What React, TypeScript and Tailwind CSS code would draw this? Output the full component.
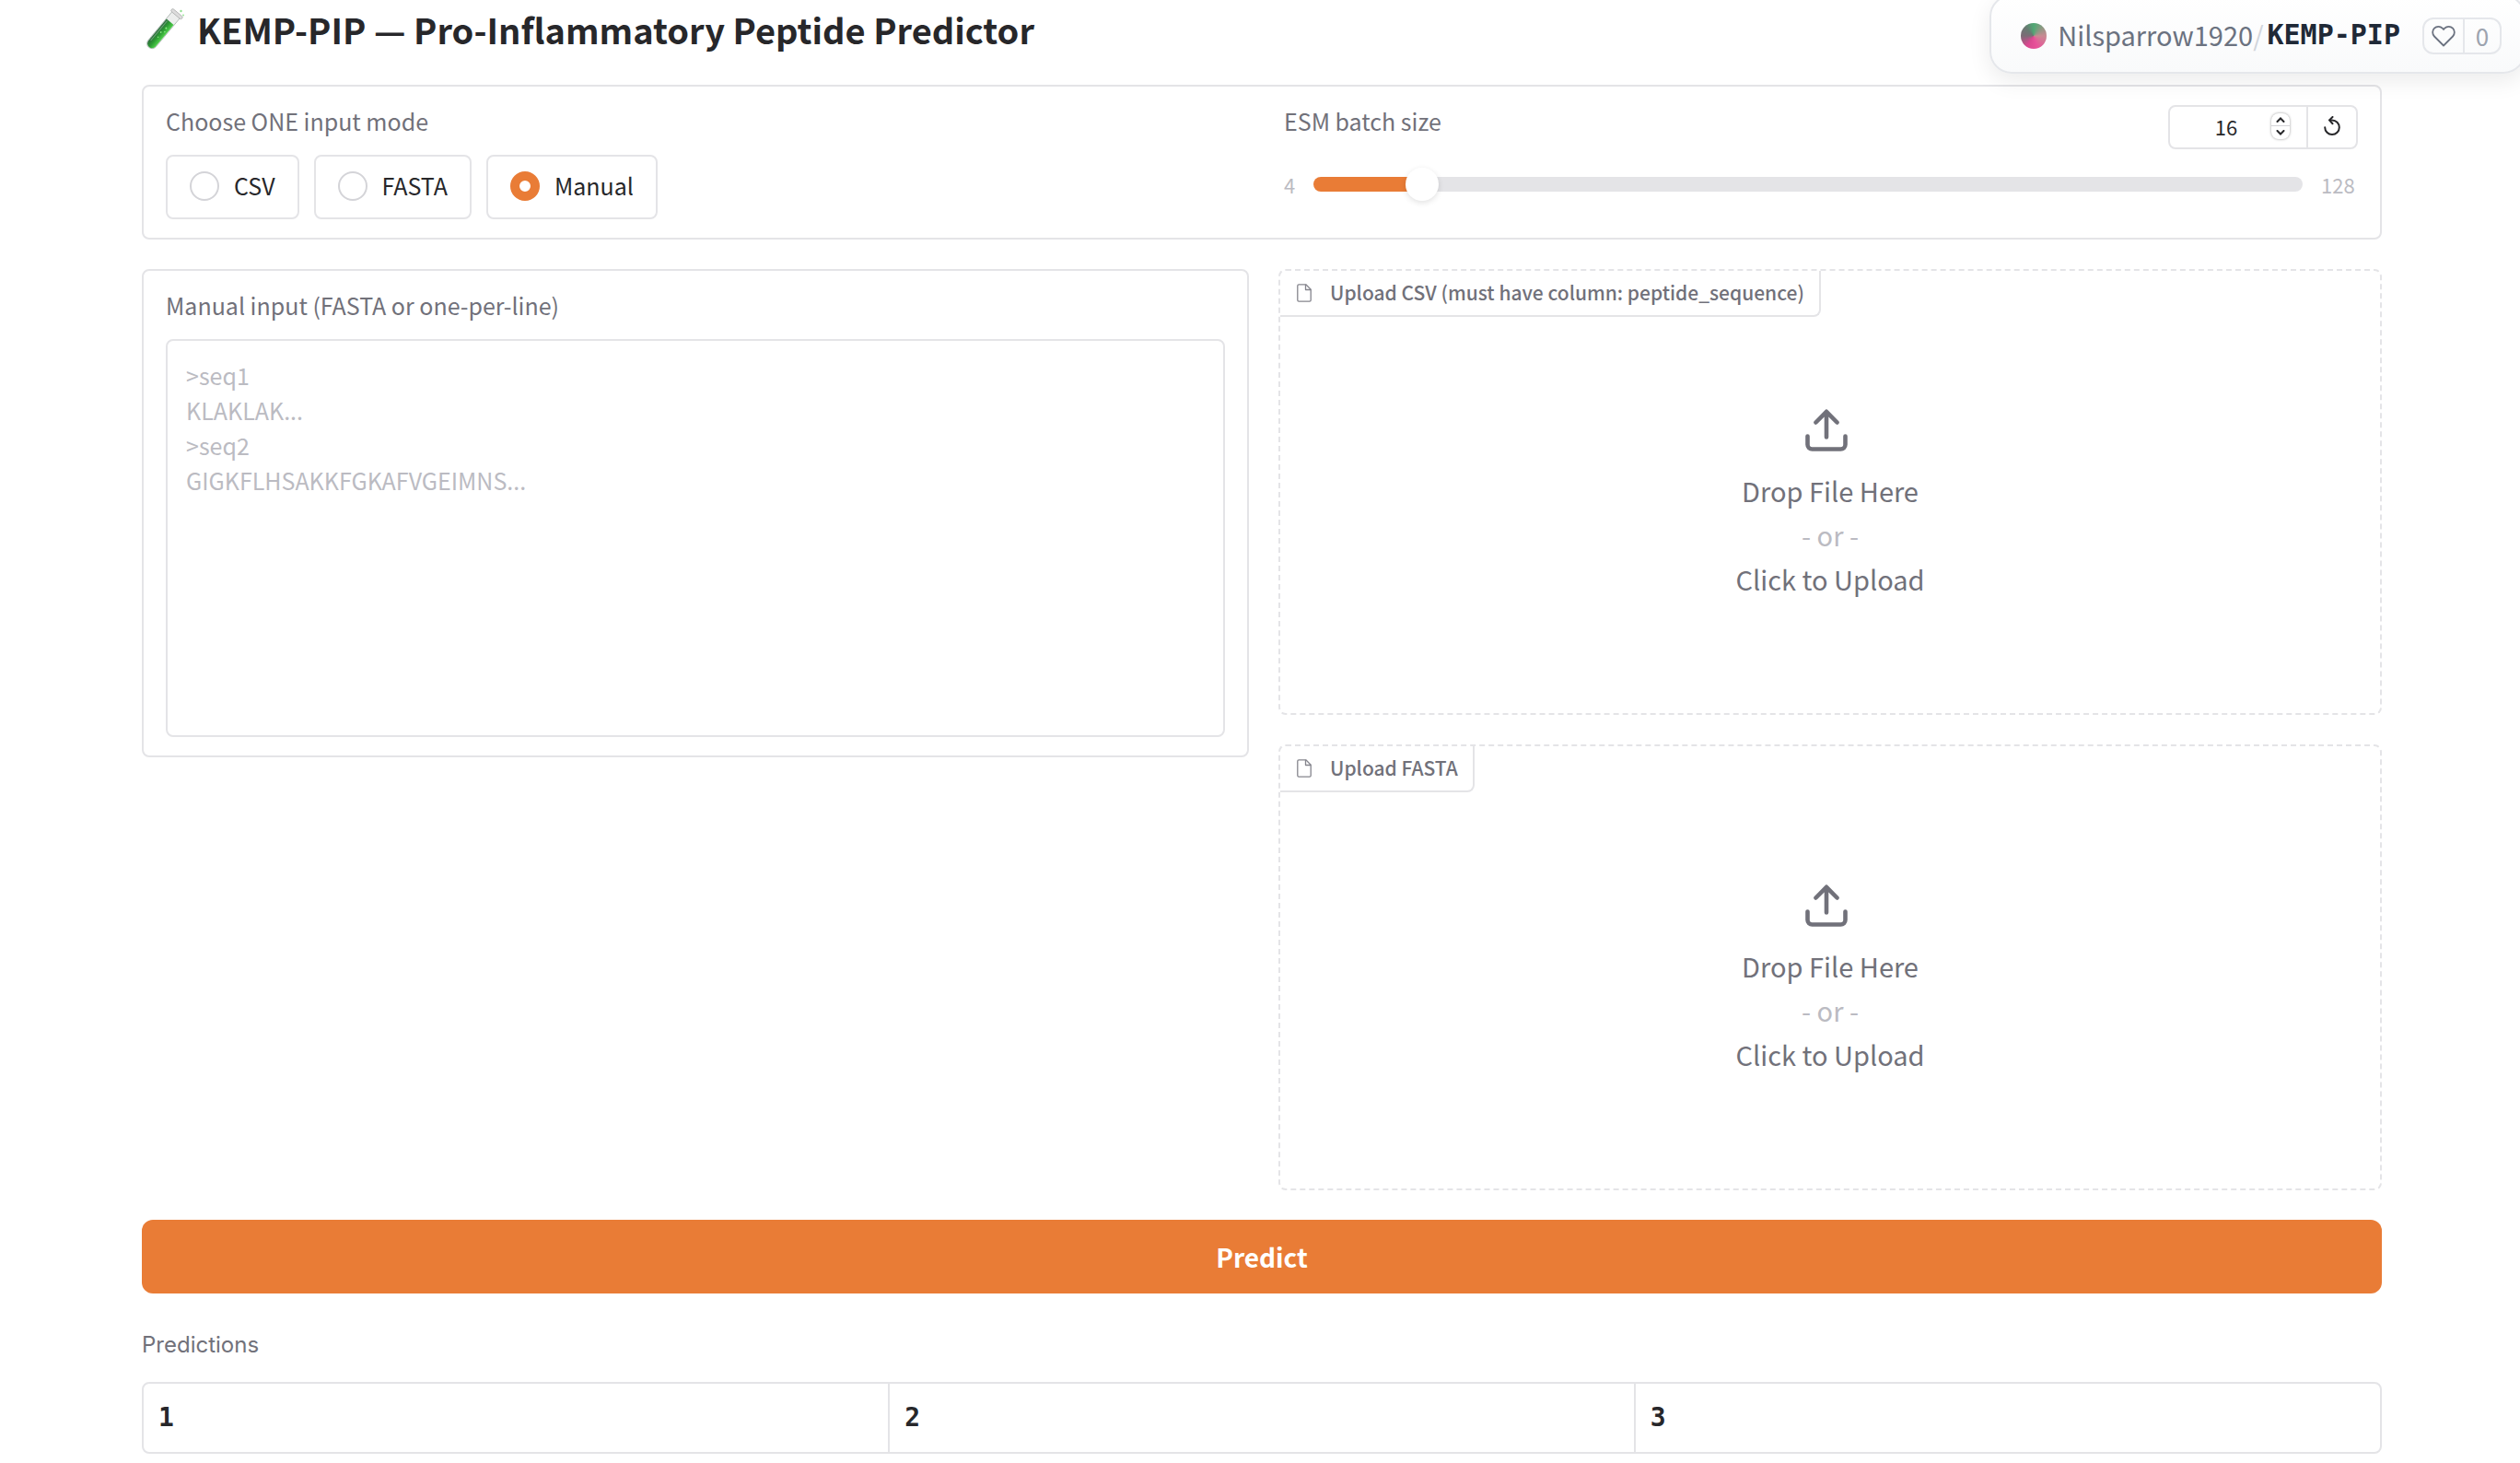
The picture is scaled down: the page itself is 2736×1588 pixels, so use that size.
import { useState } from 'react';

const border = 'border-2 border-[#e4e4e7]';

function TestTube() {
  return (
    <svg viewBox="0 0 48 48" className="size-12 shrink-0" aria-hidden="true">
      <defs>
        <linearGradient id="liquid" x1="0" y1="0" x2="1" y2="0">
          <stop offset="0" stopColor="#2c6b3c" />
          <stop offset="0.5" stopColor="#2c9a33" />
          <stop offset="1" stopColor="#4fcf4b" />
        </linearGradient>
      </defs>
      <g transform="rotate(40 23 25)">
        <path d="M17.500 2h11v41.500a5.500 5.500 0 0 1-11 0z" fill="#eceeed" stroke="#a9b3ae" strokeWidth="0.800" />
        <path d="M18 13h10v30.500a5 5 0 0 1-10 0z" fill="url(#liquid)" />
        <path d="M19.800 14v28" stroke="#8fb59a" strokeWidth="1" opacity="0.7" />
        <rect x="15.500" y="0" width="15" height="3.500" rx="1.700" fill="#dcdcdc" stroke="#a5a8a6" strokeWidth="0.700" />
        <circle cx="24" cy="21" r="1" fill="#8be884" />
        <circle cx="22.500" cy="28" r="0.900" fill="#8be884" />
        <circle cx="25.500" cy="25" r="0.800" fill="#8be884" />
        <circle cx="23.500" cy="34" r="0.700" fill="#8be884" />
      </g>
      <circle cx="42.500" cy="4" r="1.200" fill="#8fe08e" />
      <circle cx="45" cy="8.500" r="0.900" fill="#8fe08e" />
    </svg>
  );
}

function FileIcon() {
  return (
    <svg viewBox="0 0 16 20" className="h-5 w-4" fill="none" stroke="#85858d" strokeWidth="1.300" strokeLinejoin="round" aria-hidden="true">
      <path d="M2.200 0.800h7.600L15.200 6.200v11.600a1.400 1.400 0 0 1-1.400 1.400H2.200A1.400 1.400 0 0 1 0.800 17.800V2.200A1.400 1.400 0 0 1 2.200 0.800z" />
      <path d="M9.500 0.800v5.700h5.700" />
    </svg>
  );
}

function UploadIcon() {
  return (
    <svg viewBox="0 0 46 46" className="mr-2 size-[46px]" fill="none" stroke="#71717a" strokeWidth="4.600" strokeLinecap="round" strokeLinejoin="round" aria-hidden="true">
      <path d="M2.500 29.500v9a5 5 0 0 0 5 5h31a5 5 0 0 0 5-5v-9" />
      <path d="M11.500 14.500L23 2.800l11.500 11.700M23 3.500v27" />
    </svg>
  );
}

function Dropzone({ label }: { label: string }) {
  return (
    <section className="relative flex h-[484px] rounded-lg border-2 border-dashed border-[#e4e4e7]">
      <div className="absolute top-0 left-0 flex h-[50px] items-center gap-5 rounded-br-lg border-r-2 border-b-2 border-[#e4e4e7] pr-4 pl-[18px] text-[21px] font-medium text-[#71717a]">
        <FileIcon />
        {label}
      </div>
      <button type="button" aria-label={label} className="flex w-full flex-col items-center justify-center pt-7 text-[29px] leading-[48px] text-[#71717a]">
        <UploadIcon />
        <span className="mt-[18px]">Drop File Here</span>
        <span className="text-[#bbbbc2]">- or -</span>
        <span>Click to Upload</span>
      </button>
    </section>
  );
}

function SpaceBadge() {
  return (
    <div className="absolute top-[-6px] right-[-6px] flex h-[86px] items-center rounded-[24px] border-2 border-[#e5e7eb] bg-linear-to-b from-white to-[#f9fafb] pt-1 pr-[24px] pl-[32px] shadow-[0_8px_24px_rgba(0,0,0,0.08)]">
      <span className="size-7 rounded-full bg-[conic-gradient(from_0deg,#4fa874,#c98a92_25%,#e8539a_45%,#d8488f_60%,#7c6b76_75%,#687a72_88%,#4fa874)]" />
      <a href="#owner" className="ml-3 pb-1 text-[29px] leading-10 text-[#6b7280]">Nilsparrow1920</a>
      <span className="mr-1 pb-1 text-[29px] leading-10 text-[#d1d5db]">/</span>
      <a href="#space" className="pb-[2px] font-['DejaVu_Sans_Mono',monospace] text-[30px] leading-10 font-bold text-[#1f2937]">KEMP-PIP</a>
      <div className="ml-6 flex h-10 overflow-hidden rounded-xl border-2 border-[#e5e7eb]">
        <button type="button" aria-label="Like" className="flex w-[44px] items-center justify-center border-r-2 border-[#e5e7eb]">
          <svg viewBox="0 0 26 24" className="h-6 w-[26px]" fill="none" stroke="#6b7280" strokeWidth="1.800" strokeLinejoin="round" aria-hidden="true">
            <path d="M13 22.500L3 12.500a6.200 6.200 0 0 1 0-8.800 6.200 6.200 0 0 1 8.800 0L13 5l1.200-1.300a6.200 6.200 0 0 1 8.800 0 6.200 6.200 0 0 1 0 8.800z" />
          </svg>
        </button>
        <span className="flex w-[38px] items-center justify-center text-[26px] leading-9 text-[#9ca3af]">0</span>
      </div>
    </div>
  );
}

export default function App() {
  const [mode, setMode] = useState('Manual');
  const [batch, setBatch] = useState(16);
  const fill = ((batch - 4) / 124) * 100;

  return (
    <div className="relative min-h-screen overflow-hidden bg-white px-[154px] pb-[10px] pr-[150px] font-['Noto_Sans_CJK_SC',sans-serif] text-[#27272a]">
      <h1 className="flex h-16 items-center gap-3 text-[38px] leading-[60px] font-bold">
        <TestTube />
        KEMP-PIP — Pro-Inflammatory Peptide Predictor
      </h1>

      <main className="mt-7 flex flex-col gap-8">
        <div className={`${border} grid grid-cols-[1214fr_1166fr] rounded-lg px-6 pt-[18px] pb-5`}>
          <fieldset>
            <legend className="text-[25px] leading-[38px] text-[#71717a]">Choose ONE input mode</legend>
            <div className="mt-[18px] flex gap-4">
              {['CSV', 'FASTA', 'Manual'].map((name) => (
                <label key={name} className={`${border} flex h-[70px] items-center gap-4 rounded-lg px-6 pb-[2px] text-[25px]`}>
                  <input
                    type="radio"
                    name="mode"
                    checked={mode === name}
                    onChange={() => setMode(name)}
                    className="size-8 appearance-none rounded-full border-2 border-[#d4d4d8] checked:border-[10px] checked:border-[#e97c36]"
                  />
                  {name}
                </label>
              ))}
            </div>
          </fieldset>

          <div>
            <div className="flex justify-between">
              <label htmlFor="batch" className="text-[25px] leading-[38px] text-[#71717a]">ESM batch size</label>
              <div className={`${border} mt-[2px] flex h-12 rounded-lg`}>
                <div className="flex w-[148px] items-center pr-[18px] pb-[2px] pl-3">
                  <input
                    type="number"
                    aria-label="ESM batch size value"
                    value={batch}
                    onChange={(e) => setBatch(Number(e.target.value))}
                    className="w-full min-w-0 [appearance:textfield] text-center text-[22px] outline-none [&::-webkit-inner-spin-button]:appearance-none"
                  />
                  <div className="flex w-5 shrink-0 flex-col rounded-lg shadow-[0_0_3px_rgba(0,0,0,0.4)]">
                    <button type="button" aria-label="Increase" onClick={() => setBatch(batch + 1)} className="flex h-[14px] items-center justify-center border-b border-[#d4d4d8]">
                      <svg viewBox="0 0 10 6" className="h-[6px] w-[10px]" fill="none" stroke="#27272a" strokeWidth="2" strokeLinecap="round" aria-hidden="true"><path d="M1.500 5L5 1.500 8.500 5" /></svg>
                    </button>
                    <button type="button" aria-label="Decrease" onClick={() => setBatch(batch - 1)} className="flex h-[14px] items-center justify-center">
                      <svg viewBox="0 0 10 6" className="h-[6px] w-[10px]" fill="none" stroke="#27272a" strokeWidth="2" strokeLinecap="round" aria-hidden="true"><path d="M1.500 1L5 4.500 8.500 1" /></svg>
                    </button>
                  </div>
                </div>
                <button type="button" aria-label="Reset" onClick={() => setBatch(16)} className="flex w-[54px] items-center justify-center border-l-2 border-[#e4e4e7] pb-1">
                  <svg viewBox="0 0 18 21" className="h-[21px] w-[18px]" fill="none" stroke="#27272a" strokeWidth="2" strokeLinecap="round" strokeLinejoin="round" aria-hidden="true">
                    <path d="M1.200 12.200A7.800 7.800 0 1 0 9 4.400H6.500" />
                    <path d="M9.500 1L6 4.400l3.500 3.800" />
                  </svg>
                </button>
              </div>
            </div>
            <div className="mt-5 flex items-center text-[22px] leading-9 text-[#bbbbc2]">
              <span className="w-8">4</span>
              <input
                id="batch"
                type="range"
                min={4}
                max={128}
                value={batch}
                onChange={(e) => setBatch(Number(e.target.value))}
                style={{ backgroundImage: `linear-gradient(to right, #e97c36 ${fill}%, #e4e4e7 ${fill}%)` }}
                className="h-4 min-w-0 flex-1 appearance-none rounded-lg [&::-webkit-slider-thumb]:size-9 [&::-webkit-slider-thumb]:appearance-none [&::-webkit-slider-thumb]:rounded-full [&::-webkit-slider-thumb]:bg-white [&::-webkit-slider-thumb]:shadow-[0_2px_6px_rgba(0,0,0,0.12)]"
              />
              <span className="w-[60px] pl-5">128</span>
            </div>
          </div>
        </div>

        <div className="grid grid-cols-[1202fr_1198fr] items-start gap-8">
          <div className={`${border} flex flex-col rounded-lg px-6 pt-[18px] pb-5`}>
            <label htmlFor="manual" className="text-[25px] leading-[38px] text-[#71717a]">Manual input (FASTA or one-per-line)</label>
            <textarea
              id="manual"
              placeholder={'>seq1\nKLAKLAK...\n>seq2\nGIGKFLHSAKKFGKAFVGEIMNS...'}
              className={`${border} mt-[18px] h-[432px] resize-none rounded-lg px-5 py-[18px] text-[25px] leading-[38px] outline-none placeholder:text-[#bbbbc2]`}
            />
          </div>
          <div className="flex flex-col gap-8">
            <Dropzone label="Upload CSV (must have column: peptide_sequence)" />
            <Dropzone label="Upload FASTA" />
          </div>
        </div>

        <button type="button" className="h-20 rounded-xl bg-[#e97c36] text-[28px] font-bold text-white">Predict</button>
      </main>

      <section className="mt-8">
        <h2 id="predictions" className="font-['Inter',sans-serif] text-[24px] leading-[48px] text-[#71717a]">Predictions</h2>
        <div className={`${border} mt-4 overflow-hidden rounded-lg`}>
          <table aria-labelledby="predictions" className="w-full table-fixed text-left">
            <thead>
              <tr className="h-[74px] divide-x-2 divide-[#e4e4e7]">
                {['1', '2', '3'].map((n) => (
                  <th key={n} className="px-4 font-['DejaVu_Sans_Mono',monospace] text-[28px] leading-10 font-bold">{n}</th>
                ))}
              </tr>
            </thead>
          </table>
        </div>
      </section>

      <SpaceBadge />
    </div>
  );
}
